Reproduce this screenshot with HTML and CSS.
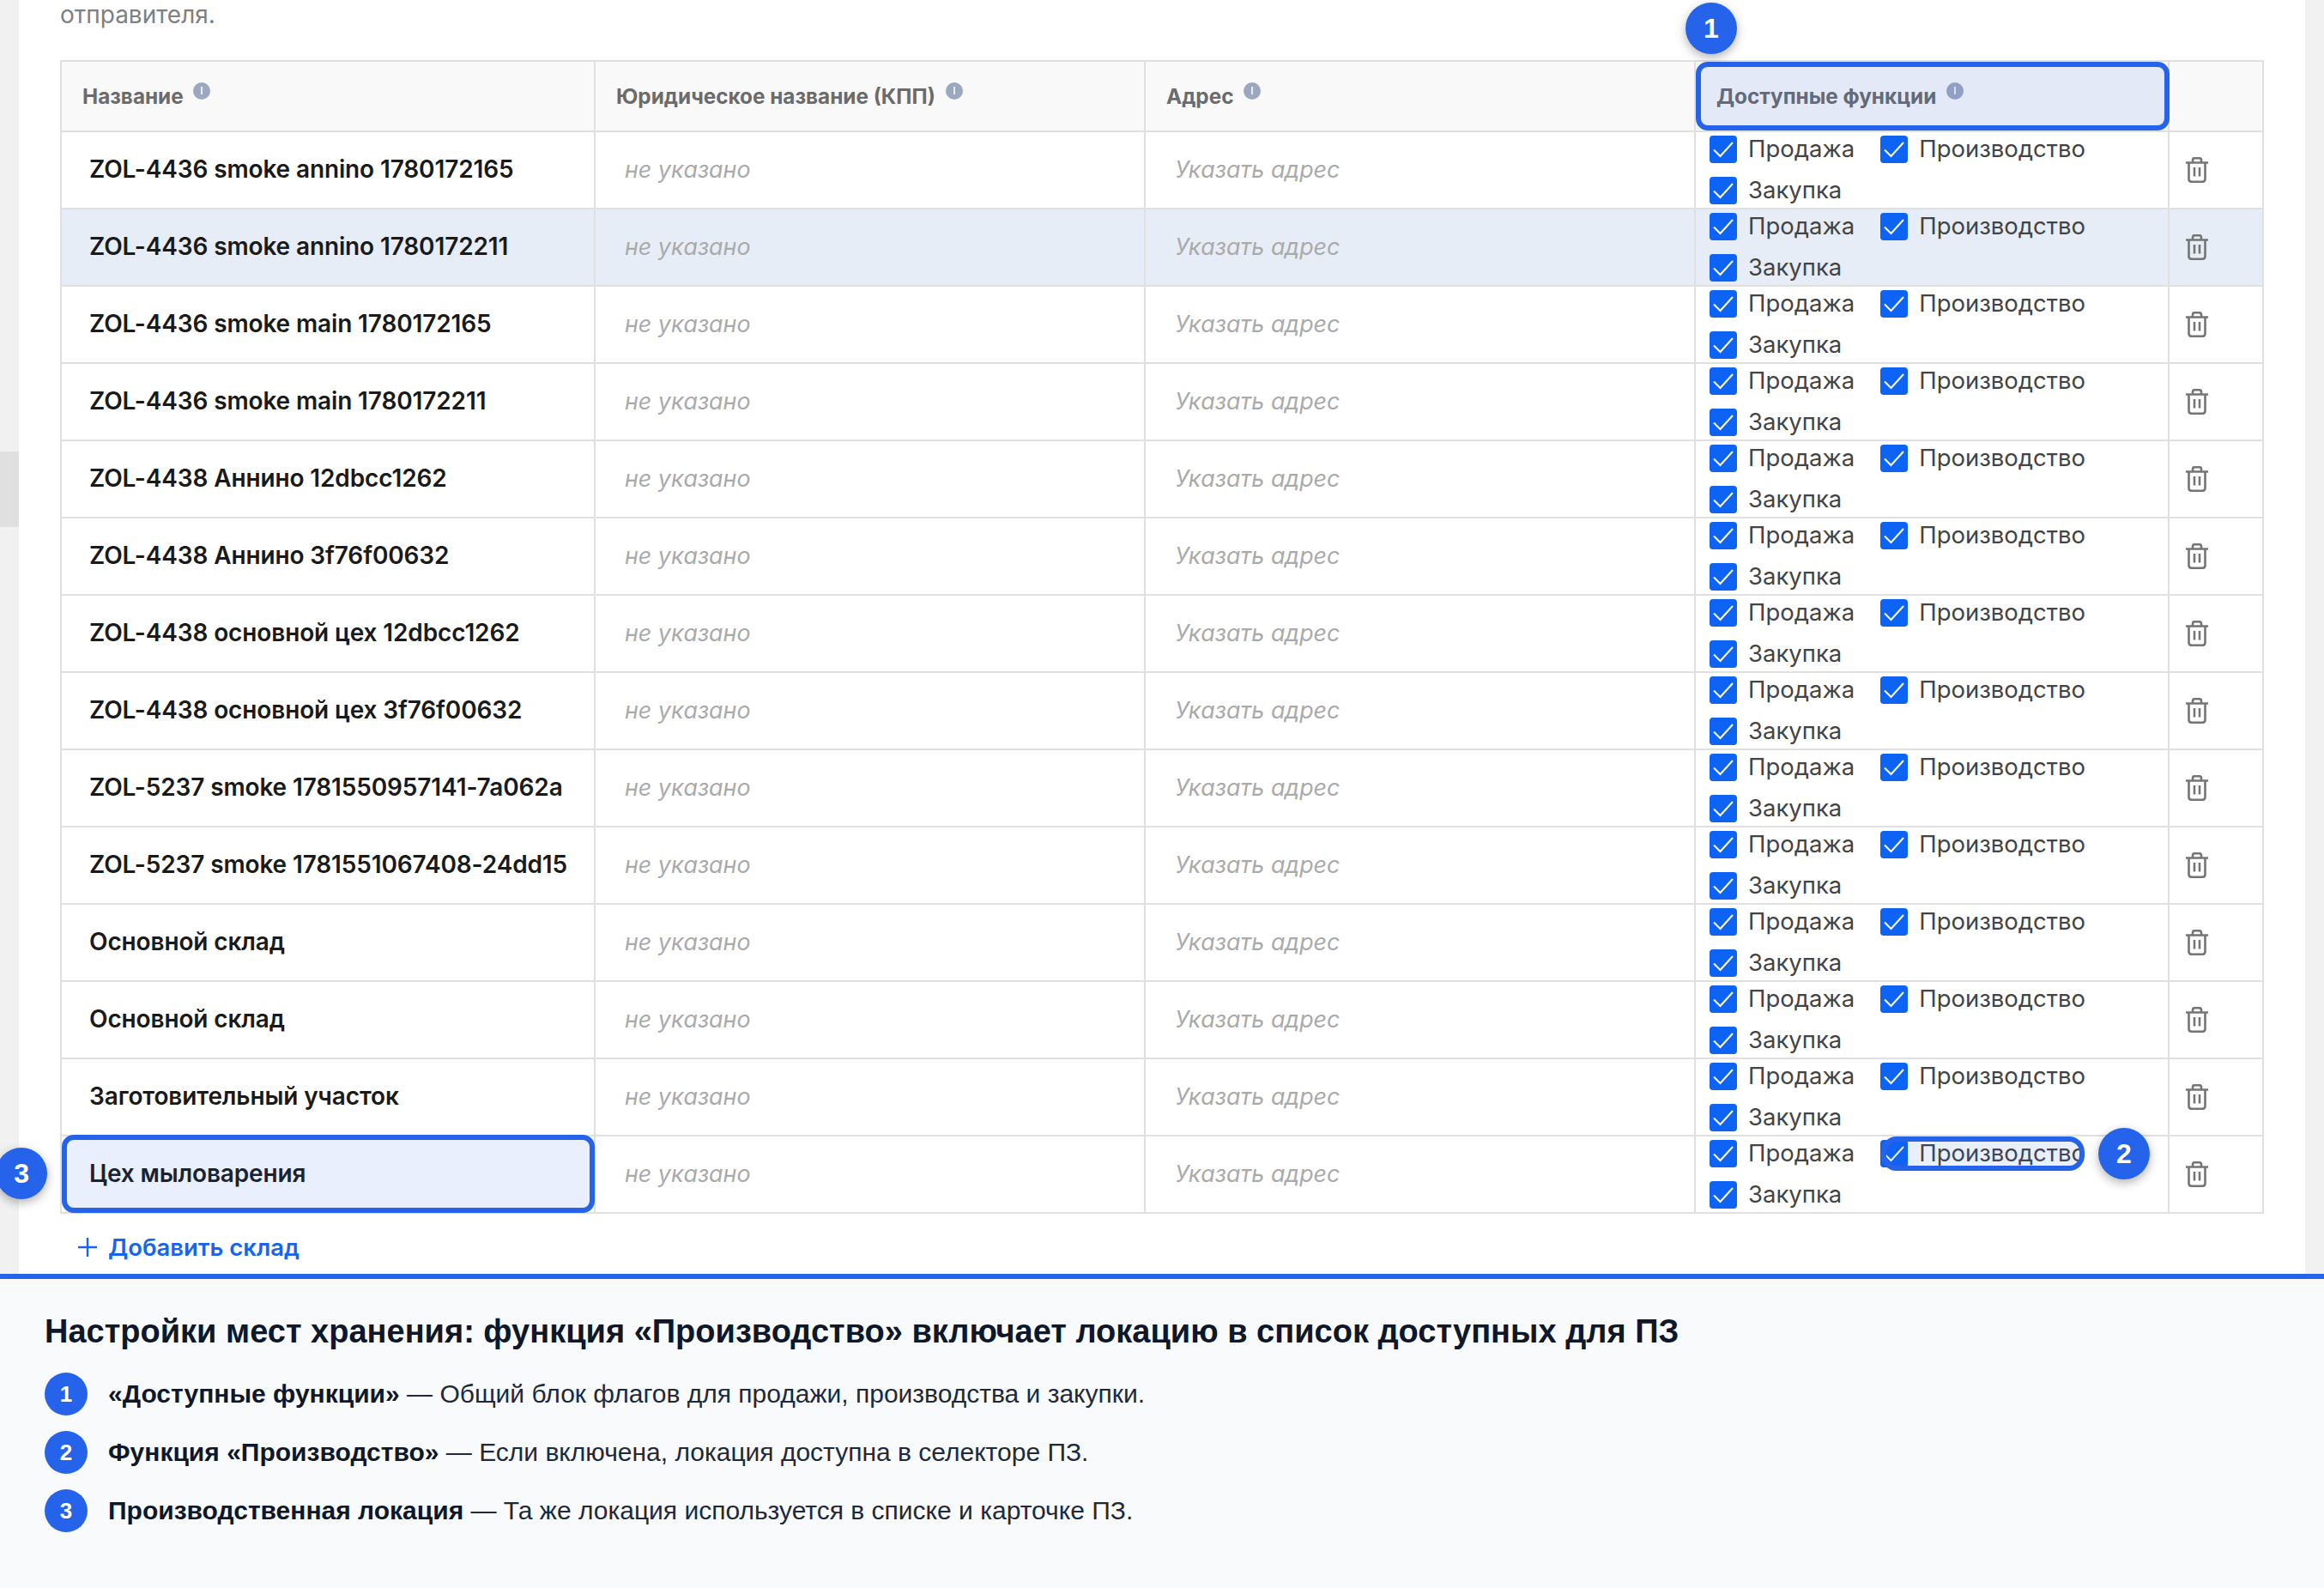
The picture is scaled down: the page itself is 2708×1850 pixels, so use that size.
FILE: index.html
```html
<!DOCTYPE html>
<html>
	<head>
		<meta charset="utf-8">
		<title>Настройки мест хранения</title>
		<link rel="stylesheet" href="styles.css">
	</head>
	<body>
		<svg class="defs" width="0" height="0">
			<symbol id="check" viewBox="0 0 32 32"><path d="M5 16.5 L12.5 24 L27 8" fill="none" stroke="#fff" stroke-width="2"/></symbol>
			<symbol id="trash" viewBox="0 0 26 30"><path d="M0 6.5 H26 M8 6 V3.5 Q8 1.2 10.5 1.2 H15.5 Q18 1.2 18 3.5 V6 M3.5 6.5 V25.5 Q3.5 28.8 6.8 28.8 H19.2 Q22.5 28.8 22.5 25.5 V6.5 M10 12 V22.5 M16 12 V22.5" fill="none" stroke="#757575" stroke-width="2.6"/></symbol>
			<symbol id="info" viewBox="0 0 20 20"><circle cx="10" cy="10" r="10" fill="#9ba8c0"/><path d="M10 5 V14" stroke="#fff" stroke-width="1.6"/></symbol>
		</svg>
		<div class="page">
			<div class="strip"><div class="thumb"></div></div>
			<div class="content">
				<p class="note">отправителя.</p>
				<table class="stores">
					<colgroup>
						<col class="c-name"><col class="c-legal"><col class="c-addr"><col class="c-func"><col class="c-del">
					</colgroup>
					<thead>
						<tr>
							<th>Название <svg class="info"><use href="#info"/></svg></th>
							<th>Юридическое название (КПП) <svg class="info"><use href="#info"/></svg></th>
							<th>Адрес <svg class="info"><use href="#info"/></svg></th>
							<th class="th-func">
								Доступные функции <svg class="info"><use href="#info"/></svg>
								<div class="mark mark-head"></div>
								<div class="badge badge-1">1</div>
							</th>
							<th></th>
						</tr>
					</thead>
					<tbody>
						<tr>
							<td class="name">ZOL-4436 smoke annino 1780172165</td><td class="empty">не указано</td><td class="empty">Указать адрес</td>
							<td class="funcs"><div class="flags"><label><span class="box"><svg><use href="#check"/></svg></span>Продажа</label><label><span class="box"><svg><use href="#check"/></svg></span>Производство</label><label><span class="box"><svg><use href="#check"/></svg></span>Закупка</label></div></td>
							<td class="del"><svg class="trash"><use href="#trash"/></svg></td>
						</tr>
						<tr class="active">
							<td class="name">ZOL-4436 smoke annino 1780172211</td><td class="empty">не указано</td><td class="empty">Указать адрес</td>
							<td class="funcs"><div class="flags"><label><span class="box"><svg><use href="#check"/></svg></span>Продажа</label><label><span class="box"><svg><use href="#check"/></svg></span>Производство</label><label><span class="box"><svg><use href="#check"/></svg></span>Закупка</label></div></td>
							<td class="del"><svg class="trash"><use href="#trash"/></svg></td>
						</tr>
						<tr>
							<td class="name">ZOL-4436 smoke main 1780172165</td><td class="empty">не указано</td><td class="empty">Указать адрес</td>
							<td class="funcs"><div class="flags"><label><span class="box"><svg><use href="#check"/></svg></span>Продажа</label><label><span class="box"><svg><use href="#check"/></svg></span>Производство</label><label><span class="box"><svg><use href="#check"/></svg></span>Закупка</label></div></td>
							<td class="del"><svg class="trash"><use href="#trash"/></svg></td>
						</tr>
						<tr>
							<td class="name">ZOL-4436 smoke main 1780172211</td><td class="empty">не указано</td><td class="empty">Указать адрес</td>
							<td class="funcs"><div class="flags"><label><span class="box"><svg><use href="#check"/></svg></span>Продажа</label><label><span class="box"><svg><use href="#check"/></svg></span>Производство</label><label><span class="box"><svg><use href="#check"/></svg></span>Закупка</label></div></td>
							<td class="del"><svg class="trash"><use href="#trash"/></svg></td>
						</tr>
						<tr>
							<td class="name">ZOL-4438 Аннино 12dbcc1262</td><td class="empty">не указано</td><td class="empty">Указать адрес</td>
							<td class="funcs"><div class="flags"><label><span class="box"><svg><use href="#check"/></svg></span>Продажа</label><label><span class="box"><svg><use href="#check"/></svg></span>Производство</label><label><span class="box"><svg><use href="#check"/></svg></span>Закупка</label></div></td>
							<td class="del"><svg class="trash"><use href="#trash"/></svg></td>
						</tr>
						<tr>
							<td class="name">ZOL-4438 Аннино 3f76f00632</td><td class="empty">не указано</td><td class="empty">Указать адрес</td>
							<td class="funcs"><div class="flags"><label><span class="box"><svg><use href="#check"/></svg></span>Продажа</label><label><span class="box"><svg><use href="#check"/></svg></span>Производство</label><label><span class="box"><svg><use href="#check"/></svg></span>Закупка</label></div></td>
							<td class="del"><svg class="trash"><use href="#trash"/></svg></td>
						</tr>
						<tr>
							<td class="name">ZOL-4438 основной цех 12dbcc1262</td><td class="empty">не указано</td><td class="empty">Указать адрес</td>
							<td class="funcs"><div class="flags"><label><span class="box"><svg><use href="#check"/></svg></span>Продажа</label><label><span class="box"><svg><use href="#check"/></svg></span>Производство</label><label><span class="box"><svg><use href="#check"/></svg></span>Закупка</label></div></td>
							<td class="del"><svg class="trash"><use href="#trash"/></svg></td>
						</tr>
						<tr>
							<td class="name">ZOL-4438 основной цех 3f76f00632</td><td class="empty">не указано</td><td class="empty">Указать адрес</td>
							<td class="funcs"><div class="flags"><label><span class="box"><svg><use href="#check"/></svg></span>Продажа</label><label><span class="box"><svg><use href="#check"/></svg></span>Производство</label><label><span class="box"><svg><use href="#check"/></svg></span>Закупка</label></div></td>
							<td class="del"><svg class="trash"><use href="#trash"/></svg></td>
						</tr>
						<tr>
							<td class="name">ZOL-5237 smoke 1781550957141-7a062a</td><td class="empty">не указано</td><td class="empty">Указать адрес</td>
							<td class="funcs"><div class="flags"><label><span class="box"><svg><use href="#check"/></svg></span>Продажа</label><label><span class="box"><svg><use href="#check"/></svg></span>Производство</label><label><span class="box"><svg><use href="#check"/></svg></span>Закупка</label></div></td>
							<td class="del"><svg class="trash"><use href="#trash"/></svg></td>
						</tr>
						<tr>
							<td class="name">ZOL-5237 smoke 1781551067408-24dd15</td><td class="empty">не указано</td><td class="empty">Указать адрес</td>
							<td class="funcs"><div class="flags"><label><span class="box"><svg><use href="#check"/></svg></span>Продажа</label><label><span class="box"><svg><use href="#check"/></svg></span>Производство</label><label><span class="box"><svg><use href="#check"/></svg></span>Закупка</label></div></td>
							<td class="del"><svg class="trash"><use href="#trash"/></svg></td>
						</tr>
						<tr>
							<td class="name">Основной склад</td><td class="empty">не указано</td><td class="empty">Указать адрес</td>
							<td class="funcs"><div class="flags"><label><span class="box"><svg><use href="#check"/></svg></span>Продажа</label><label><span class="box"><svg><use href="#check"/></svg></span>Производство</label><label><span class="box"><svg><use href="#check"/></svg></span>Закупка</label></div></td>
							<td class="del"><svg class="trash"><use href="#trash"/></svg></td>
						</tr>
						<tr>
							<td class="name">Основной склад</td><td class="empty">не указано</td><td class="empty">Указать адрес</td>
							<td class="funcs"><div class="flags"><label><span class="box"><svg><use href="#check"/></svg></span>Продажа</label><label><span class="box"><svg><use href="#check"/></svg></span>Производство</label><label><span class="box"><svg><use href="#check"/></svg></span>Закупка</label></div></td>
							<td class="del"><svg class="trash"><use href="#trash"/></svg></td>
						</tr>
						<tr>
							<td class="name">Заготовительный участок</td><td class="empty">не указано</td><td class="empty">Указать адрес</td>
							<td class="funcs"><div class="flags"><label><span class="box"><svg><use href="#check"/></svg></span>Продажа</label><label><span class="box"><svg><use href="#check"/></svg></span>Производство</label><label><span class="box"><svg><use href="#check"/></svg></span>Закупка</label></div></td>
							<td class="del"><svg class="trash"><use href="#trash"/></svg></td>
						</tr>
						<tr>
							<td class="name">
								Цех мыловарения
								<div class="mark mark-name"></div>
								<div class="badge badge-3">3</div>
							</td>
							<td class="empty">не указано</td><td class="empty">Указать адрес</td>
							<td class="funcs">
								<div class="flags"><label><span class="box"><svg><use href="#check"/></svg></span>Продажа</label><label><span class="box"><svg><use href="#check"/></svg></span>Производство</label><label><span class="box"><svg><use href="#check"/></svg></span>Закупка</label></div>
								<div class="mark mark-flag"></div>
								<div class="badge badge-2">2</div>
							</td>
							<td class="del"><svg class="trash"><use href="#trash"/></svg></td>
						</tr>
					</tbody>
				</table>
				<a class="add"><svg class="plus" viewBox="0 0 22 22"><path d="M11 0 V22 M0 11 H22" stroke="#1565f0" stroke-width="2.4"/></svg>Добавить склад</a>
			</div>
			<div class="strip strip-right"></div>
		</div>
		<div class="legend">
			<h1>Настройки мест хранения: функция «Производство» включает локацию в список доступных для ПЗ</h1>
			<ol>
				<li><span class="num">1</span><span><b>«Доступные функции»</b> — Общий блок флагов для продажи, производства и закупки.</span></li>
				<li><span class="num">2</span><span><b>Функция «Производство»</b> — Если включена, локация доступна в селекторе ПЗ.</span></li>
				<li><span class="num">3</span><span><b>Производственная локация</b> — Та же локация используется в списке и карточке ПЗ.</span></li>
			</ol>
		</div>
	</body>
</html>
```

FILE: styles.css
```css
*{
	margin: 0px;
	padding: 0px;
	box-sizing: border-box;
}
body{
	width: 2708px;
	height: 1850px;
	overflow: hidden;
	background: #fff;
	font-family: Inter, "Noto Sans", sans-serif;
}
.defs{
	position: absolute;
}
.page{
	display: flex;
	height: 1484px;
	overflow: hidden;
}
.strip{
	width: 22px;
	flex: none;
	background: #f1f1f1;
}
.thumb{
	height: 88px;
	margin-top: 526px;
	background: #e0e0e0;
}
.content{
	flex: 1;
	padding-left: 48px;
	min-width: 0;
}
.note{
	font-size: 28px;
	line-height: 35px;
	color: #808080;
	margin-bottom: 35px;
}

/* table */
.stores{
	width: 2568px;
	table-layout: fixed;
	border-collapse: separate;
	border-spacing: 0;
	border-top: 2px solid #e0e0e0;
	border-left: 2px solid #e0e0e0;
}
.c-name{ width: 622px; }
.c-legal{ width: 641px; }
.c-addr{ width: 641px; }
.c-func{ width: 552px; }
.c-del{ width: 110px; }
.stores th, .stores td{
	position: relative;
	border-right: 2px solid #e0e0e0;
	border-bottom: 2px solid #e0e0e0;
}
.stores th{
	height: 82px;
	padding: 0 0 2px 24px;
	background: #f9f9f9;
	text-align: left;
	font-size: 24.3px;
	font-weight: 700;
	color: #6b6b6b;
	vertical-align: middle;
}
.stores td{
	height: 90px;
	vertical-align: middle;
}
.info{
	width: 20px;
	height: 20px;
	margin-left: 6px;
	vertical-align: 5px;
}
.active td{
	background: #e7edf7;
}
.stores .name{
	padding: 0 0 2px 32px;
	font-size: 28px;
	font-weight: 600;
	letter-spacing: -0.13px;
	color: #1a1a1a;
}
.stores .empty{
	padding: 0 0 3px 34px;
	font-size: 26.8px;
	font-style: italic;
	color: #aaa;
}
.stores .funcs{
	padding: 4px 0 0 16px;
	vertical-align: top;
}
.flags{
	display: flex;
	flex-wrap: wrap;
	gap: 16px 30px;
}
.flags label{
	display: flex;
	align-items: center;
	gap: 13px;
	height: 30px;
	margin-bottom: 2px;
	font-size: 27.5px;
	color: #444;
}
.box{
	display: block;
	flex: none;
	width: 32px;
	height: 32px;
	margin-bottom: -2px;
	border-radius: 4px;
	background: #0d63f3;
}
.box svg{
	display: block;
	width: 32px;
	height: 32px;
}
.del{
	padding-left: 19px;
}
.trash{
	display: block;
	width: 26px;
	height: 30px;
}

/* highlight frames and numbered badges */
.mark{
	position: absolute;
	border: 6px solid #2563eb;
	border-radius: 14px;
	background: rgba(37, 99, 235, 0.1);
}
.mark-head{
	left: 0px;
	right: -2px;
	top: 0px;
	bottom: 0px;
}
.mark-name{
	left: 0px;
	right: -1px;
	top: -2px;
	bottom: -1px;
}
.mark-flag{
	left: 216px;
	top: 0px;
	width: 237px;
	height: 40px;
	border-radius: 18px;
}
.badge{
	position: absolute;
	display: flex;
	align-items: center;
	justify-content: center;
	width: 60px;
	height: 60px;
	border-radius: 50%;
	background: #2563eb;
	color: #fff;
	font-family: "Liberation Sans", Arial, sans-serif;
	font-size: 32px;
	font-weight: 700;
	box-shadow: 0 4px 12px rgba(0, 0, 0, 0.3);
}
.badge-1{
	left: -12px;
	top: -69px;
}
.badge-2{
	left: 469px;
	top: -10px;
}
.badge-3{
	left: -77px;
	top: 13px;
}
.add{
	display: flex;
	align-items: center;
	gap: 13px;
	margin: 19px 0 0 21px;
	height: 40px;
	font-size: 27.4px;
	font-weight: 600;
	color: #1565f0;
}
.plus{
	width: 22px;
	height: 22px;
}

/* legend under the screenshot */
.legend{
	height: 366px;
	padding: 37px 52px 0;
	border-top: 6px solid #2563eb;
	background: #f8fafc;
	font-family: "Liberation Sans", Arial, sans-serif;
	color: #1e293b;
}
.legend h1{
	font-size: 38px;
	line-height: 48px;
	font-weight: 700;
	color: #0f172a;
	margin-bottom: 24px;
}
.legend ol{
	list-style: none;
}
.legend li{
	display: flex;
	align-items: center;
	gap: 24px;
	font-size: 30px;
	margin-bottom: 18px;
}
.legend b{
	color: #0f172a;
}
.num{
	display: flex;
	align-items: center;
	justify-content: center;
	flex: none;
	width: 50px;
	height: 50px;
	border-radius: 50%;
	background: #2563eb;
	color: #fff;
	font-size: 26px;
	font-weight: 700;
}
.strip-right{
	width: 22px;
}
```
